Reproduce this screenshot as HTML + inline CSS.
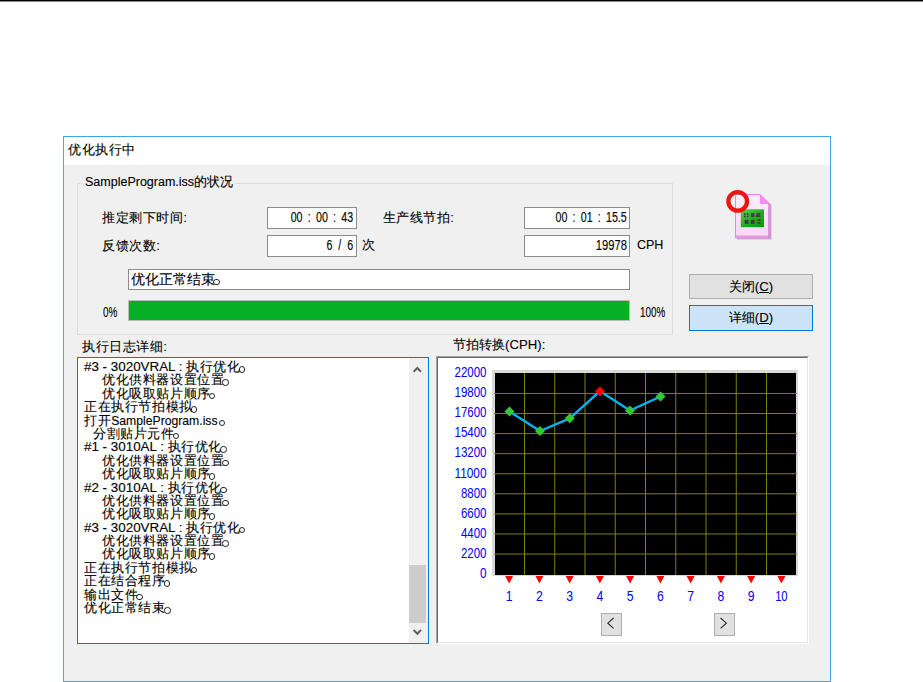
<!DOCTYPE html>
<html><head><meta charset="utf-8">
<style>
*{box-sizing:border-box;margin:0;padding:0}
html,body{width:923px;height:682px;overflow:hidden;background:#fff;font-family:"Liberation Sans",sans-serif;font-size:13.2px;color:#000}
.a{position:absolute}
.t{position:absolute;white-space:nowrap;line-height:16px;letter-spacing:.55px;-webkit-text-stroke:.12px #000}
#topline{left:0;top:0;width:923px;height:1px;background:#000;box-shadow:0 1px 0 #8a8a8a}
#dlg{left:63px;top:136px;width:768px;height:546px;border:1px solid #42a4ec;background:#f0f0f0}
.box{position:absolute;background:#fff;border:1px solid #8c8c8c}
.dg{display:inline-block;transform:scaleX(.76);transform-origin:right center;font-size:14px;white-space:pre;word-spacing:3px;letter-spacing:0}
.log{position:absolute;left:84px;top:360px;font-size:13.4px;line-height:13.4px;white-space:nowrap;-webkit-text-stroke:.12px #000}
.log div{height:13.4px;letter-spacing:.6px}
.log b{font-weight:normal;letter-spacing:0}
.d{display:inline-block;width:13px;height:0;position:relative}
.d2::after{left:1px!important}
.d3::after{left:-1.5px!important}
.d::after{content:"";position:absolute;left:-2px;top:-5px;width:6.5px;height:6.5px;border:1.2px solid #222;border-radius:50%;box-sizing:border-box}
</style></head><body>
<div class="a" id="topline"></div>
<div class="a" id="dlg"></div>
<div class="a" style="left:64px;top:137px;width:766px;height:28px;background:#fff"></div>
<div class="t" style="left:68px;top:142px;font-size:13px;letter-spacing:.55px">优化执行中</div>

<!-- group box -->
<div class="a" style="left:77px;top:183px;width:596px;height:152px;border:1px solid #dcdcdc"></div>
<div class="t" style="left:83px;top:174px;padding:0 2px;background:#f0f0f0;font-size:12.5px;letter-spacing:0">SampleProgram.iss的状况</div>
<div class="t" style="left:102px;top:209.5px">推定剩下时间:</div>
<div class="t" style="left:102px;top:237.5px">反馈次数:</div>
<div class="t" style="left:382.5px;top:209.5px">生产线节拍:</div>
<div class="box" style="left:267px;top:207px;width:90px;height:22px"></div>
<div class="box" style="left:267px;top:235px;width:90px;height:22px"></div>
<div class="box" style="left:524px;top:207px;width:106px;height:22px"></div>
<div class="box" style="left:524px;top:235px;width:106px;height:22px"></div>
<div class="t" style="right:569.5px;top:209px"><span class="dg">00 : 00 : 43</span></div>
<div class="t" style="right:569.5px;top:237px"><span class="dg" style="word-spacing:4px">6 / 6</span></div>
<div class="t" style="right:296px;top:209px"><span class="dg">00 : 01 : 15.5</span></div>
<div class="t" style="right:296px;top:237px"><span class="dg" style="transform:scaleX(.8)">19978</span></div>
<div class="t" style="left:362px;top:237px">次</div>
<div class="t" style="left:637px;top:237px;font-size:12.5px;letter-spacing:0">CPH</div>
<div class="box" style="left:128px;top:269px;width:502px;height:21px"></div>
<div class="t" style="left:130.5px;top:270.5px;font-size:14px;letter-spacing:0">优化正常结束<i class="d d3"></i></div>
<div class="a" style="left:128px;top:300px;width:502px;height:21px;border:1px solid #bcbcbc;background:#06b025"></div>
<div class="t" style="left:102.5px;top:304px"><span class="dg" style="transform-origin:left center;transform:scaleX(.66);font-size:15px">0%</span></div>
<div class="t" style="left:639.5px;top:304px"><span class="dg" style="transform-origin:left center;transform:scaleX(.66);font-size:15px">100%</span></div>

<!-- icon -->
<svg class="a" style="left:715px;top:180px" width="62" height="62" viewBox="0 0 62 62">
  <defs>
    <linearGradient id="pg" x1="0" y1="0" x2="0" y2="1"><stop offset="0" stop-color="#fdeefc"/><stop offset="1" stop-color="#fbd5f6"/></linearGradient>
    <linearGradient id="gr" x1="0" y1="0" x2="1" y2="1"><stop offset="0" stop-color="#5ccf52"/><stop offset=".5" stop-color="#22b022"/><stop offset="1" stop-color="#069406"/></linearGradient>
  </defs>
  <path d="M22 16 H46 L56.5 25 V59.5 H22 Z" fill="#8a7a8a" opacity=".45"/>
  <path d="M20.5 14.5 H45 L55 24 V58 H20.5 Z" fill="url(#pg)" stroke="#ee80ee" stroke-width="1"/>
  <rect x="53" y="24" width="2.5" height="34" fill="#d488d4" opacity=".8"/>
  <rect x="21" y="55.5" width="34" height="2.5" fill="#dc90dc" opacity=".8"/>
  <path d="M45 14.5 V24 H55 Z" fill="#f68af0"/>
  <rect x="25.8" y="29.3" width="23.2" height="17.9" fill="url(#gr)"/>
  <g fill="#3a3a3a">
    <rect x="28.9" y="33.2" width="1.6" height="1.7"/><rect x="28.9" y="35.6" width="1.6" height="1.7"/>
    <rect x="31.8" y="33.2" width="1.6" height="1.7"/><rect x="31.8" y="35.6" width="1.6" height="1.7"/>
    <rect x="36" y="33.2" width="3.5" height="3.8"/><rect x="41.3" y="33.2" width="4" height="3.8"/>
    <rect x="29.7" y="39.8" width="3.7" height="4"/><rect x="35.8" y="39.8" width="3.7" height="4"/>
    <rect x="42.6" y="39.2" width="2.7" height="1.6"/><rect x="42.6" y="42.2" width="2.7" height="1.6"/>
  </g>
  <g fill="#7a7a7a" opacity=".6"><rect x="36" y="34.6" width="3.5" height=".6"/><rect x="41.3" y="34.6" width="4" height=".6"/></g>
  <circle cx="22.7" cy="21.4" r="9.3" fill="none" stroke="#e8160f" stroke-width="4.3"/>
</svg>

<!-- buttons -->
<div class="a" style="left:689px;top:274px;width:124px;height:25px;border:1px solid #adadad;background:#e1e1e1"></div>
<div class="a" style="left:689px;top:305px;width:124px;height:26px;border:1px solid #0078d7;background:#cce4f7"></div>
<div class="t" style="left:689px;top:278.5px;width:124px;text-align:center;letter-spacing:0">关闭(<u>C</u>)</div>
<div class="t" style="left:689px;top:310px;width:124px;text-align:center;letter-spacing:0">详细(<u>D</u>)</div>

<!-- log -->
<div class="t" style="left:82px;top:339px">执行日志详细:</div>
<div class="a" style="left:77px;top:357px;width:352px;height:287px;border:1px solid #0078d7;background:#fff"></div>
<div class="a" style="left:409px;top:358px;width:19px;height:285px;background:#f0f0f0"></div>
<div class="a" style="left:409px;top:565px;width:17px;height:58px;background:#cdcdcd"></div>
<svg class="a" style="left:409px;top:358px" width="19" height="285">
  <path d="M4.6 13.8 L8.3 10 L12 13.8" fill="none" stroke="#606060" stroke-width="2"/>
  <path d="M4.6 272 L8.3 275.8 L12 272" fill="none" stroke="#606060" stroke-width="2"/>
</svg>
<div class="log">
<div><b>#3 - 3020VRAL : </b>执行优化<i class="d"></i></div>
<div style="padding-left:18px">优化供料器设置位置<i class="d"></i></div>
<div style="padding-left:18px">优化吸取贴片顺序<i class="d"></i></div>
<div>正在执行节拍模拟<i class="d"></i></div>
<div>打开<b style="font-size:12.2px">SampleProgram.iss</b><i class="d d2"></i></div>
<div style="padding-left:9px">分割贴片元件<i class="d"></i></div>
<div><b>#1 - 3010AL : </b>执行优化<i class="d"></i></div>
<div style="padding-left:18px">优化供料器设置位置<i class="d"></i></div>
<div style="padding-left:18px">优化吸取贴片顺序<i class="d"></i></div>
<div><b>#2 - 3010AL : </b>执行优化<i class="d"></i></div>
<div style="padding-left:18px">优化供料器设置位置<i class="d"></i></div>
<div style="padding-left:18px">优化吸取贴片顺序<i class="d"></i></div>
<div><b>#3 - 3020VRAL : </b>执行优化<i class="d"></i></div>
<div style="padding-left:18px">优化供料器设置位置<i class="d"></i></div>
<div style="padding-left:18px">优化吸取贴片顺序<i class="d"></i></div>
<div>正在执行节拍模拟<i class="d"></i></div>
<div>正在结合程序<i class="d"></i></div>
<div>输出文件<i class="d"></i></div>
<div>优化正常结束<i class="d d3"></i></div>
</div>

<!-- chart -->
<div class="t" style="left:453px;top:337px;letter-spacing:0">节拍转换(CPH):</div>
<div class="a" style="left:436px;top:356px;width:373px;height:288px;border:1px solid;border-color:#a0a0a0 #fff #fff #a0a0a0"></div>
<div class="a" style="left:437px;top:357px;width:371px;height:286px;border:1px solid;border-color:#696969 #e3e3e3 #e3e3e3 #696969;background:#fff"></div>
<svg class="a" style="left:0;top:0" width="923" height="682">
  <rect x="492" y="370" width="306" height="206" fill="#d9d9d9"/>
  <rect x="495" y="373" width="301" height="202" fill="#000"/>
  <g stroke="#808000" stroke-width="1">
    <path d="M524.50 373V575M554.75 373V575M585.00 373V575M615.25 373V575M645.50 373V575M675.75 373V575M706.00 373V575M736.25 373V575M766.50 373V575"/>
    <path d="M494 393.47H797M494 413.54H797M494 433.61H797M494 453.68H797M494 473.75H797M494 493.82H797M494 513.89H797M494 533.96H797M494 554.03H797"/>
  </g>
  <polyline points="509.5,411.5 540,431 569.8,418.3 600,391.2 630,410.5 660.5,396.5" fill="none" stroke="#00b4f2" stroke-width="2.4" stroke-linejoin="round"/>
  <g fill="#32c832">
    <path d="M509.5 406.5l5 5-5 5-5-5z"/><path d="M540 426l5 5-5 5-5-5z"/><path d="M569.8 413.3l5 5-5 5-5-5z"/>
    <path d="M630 405.5l5 5-5 5-5-5z"/><path d="M660.5 391.5l5 5-5 5-5-5z"/>
  </g>
  <path d="M600 386.2l5 5-5 5-5-5z" fill="#ff0000"/>
  <g fill="#ff0000"><path d="M505.12 576h8l-4 7.5z"/><path d="M535.38 576h8l-4 7.5z"/><path d="M565.62 576h8l-4 7.5z"/><path d="M595.88 576h8l-4 7.5z"/><path d="M626.12 576h8l-4 7.5z"/><path d="M656.38 576h8l-4 7.5z"/><path d="M686.62 576h8l-4 7.5z"/><path d="M716.88 576h8l-4 7.5z"/><path d="M747.12 576h8l-4 7.5z"/><path d="M777.38 576h8l-4 7.5z"/></g>
  <g fill="#0000ff" font-family="Liberation Sans" font-size="14.5" text-anchor="end">
    <text x="486.5" y="376.5" textLength="32" lengthAdjust="spacingAndGlyphs">22000</text>
    <text x="486.5" y="397" textLength="32" lengthAdjust="spacingAndGlyphs">19800</text>
    <text x="486.5" y="417" textLength="32" lengthAdjust="spacingAndGlyphs">17600</text>
    <text x="486.5" y="437" textLength="32" lengthAdjust="spacingAndGlyphs">15400</text>
    <text x="486.5" y="457" textLength="32" lengthAdjust="spacingAndGlyphs">13200</text>
    <text x="486.5" y="477.5" textLength="32" lengthAdjust="spacingAndGlyphs">11000</text>
    <text x="486.5" y="498" textLength="25.5" lengthAdjust="spacingAndGlyphs">8800</text>
    <text x="486.5" y="518" textLength="25.5" lengthAdjust="spacingAndGlyphs">6600</text>
    <text x="486.5" y="538" textLength="25.5" lengthAdjust="spacingAndGlyphs">4400</text>
    <text x="486.5" y="558" textLength="25.5" lengthAdjust="spacingAndGlyphs">2200</text>
    <text x="486.5" y="578" textLength="6.5" lengthAdjust="spacingAndGlyphs">0</text>
  </g>
  <g fill="#0000ff" font-family="Liberation Sans" font-size="14.5" text-anchor="middle">
    <text x="509.12" y="600.5" textLength="6.8" lengthAdjust="spacingAndGlyphs">1</text><text x="539.38" y="600.5" textLength="6.8" lengthAdjust="spacingAndGlyphs">2</text><text x="569.62" y="600.5" textLength="6.8" lengthAdjust="spacingAndGlyphs">3</text><text x="599.88" y="600.5" textLength="6.8" lengthAdjust="spacingAndGlyphs">4</text><text x="630.12" y="600.5" textLength="6.8" lengthAdjust="spacingAndGlyphs">5</text><text x="660.38" y="600.5" textLength="6.8" lengthAdjust="spacingAndGlyphs">6</text><text x="690.62" y="600.5" textLength="6.8" lengthAdjust="spacingAndGlyphs">7</text><text x="720.88" y="600.5" textLength="6.8" lengthAdjust="spacingAndGlyphs">8</text><text x="751.12" y="600.5" textLength="6.8" lengthAdjust="spacingAndGlyphs">9</text><text x="781.38" y="600.5" textLength="12.5" lengthAdjust="spacingAndGlyphs">10</text>
  </g>
  <rect x="601.5" y="613.5" width="20" height="22" fill="#e1e1e1" stroke="#adadad"/>
  <rect x="714.5" y="613.5" width="20" height="22" fill="#e1e1e1" stroke="#adadad"/>
  <path d="M613.6 618 L607.8 623.2 L613.6 628.4" fill="none" stroke="#222" stroke-width="1.05"/>
  <path d="M720.6 618 L726.4 623.2 L720.6 628.4" fill="none" stroke="#222" stroke-width="1.05"/>
</svg>
</body></html>
